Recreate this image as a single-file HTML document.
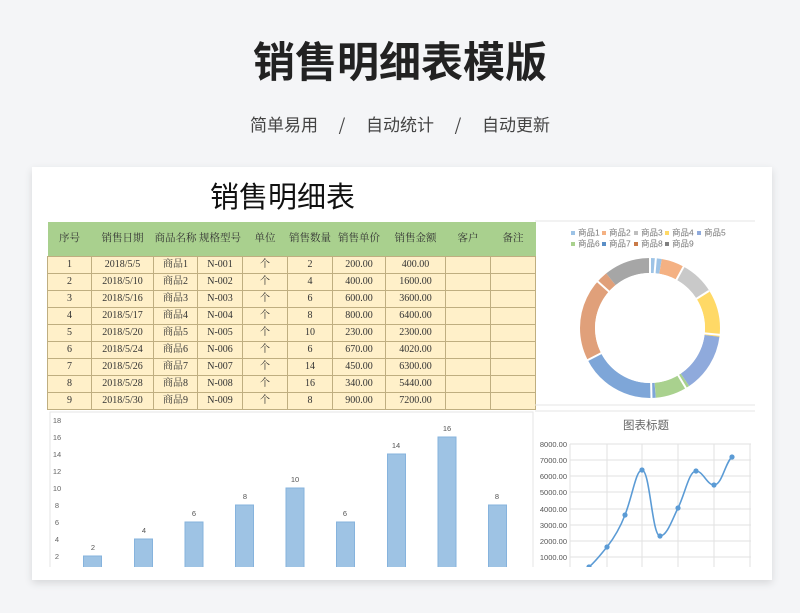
<!DOCTYPE html>
<html><head><meta charset="utf-8"><style>
*{margin:0;padding:0;box-sizing:border-box}
body{width:800px;height:613px;background:#f4f5f7;position:relative;overflow:hidden;font-family:"Liberation Sans","Noto Sans CJK SC",sans-serif}
.t{position:absolute;left:0;width:800px;text-align:center}
.card{position:absolute;left:32px;top:167px;width:740px;height:413px;background:#fff;box-shadow:0 3px 8px rgba(0,0,0,.12);overflow:hidden}
table{position:absolute;left:15px;top:55px;border-collapse:collapse;table-layout:fixed;font-family:"Liberation Serif","Noto Serif CJK SC",serif;font-size:10px;color:#333}
td{border:1px solid #bfae80;text-align:center;height:17px;line-height:16px;padding:0;background:#fff0c9;vertical-align:middle;overflow:hidden;white-space:nowrap}
td span{display:inline-block;line-height:16px;height:16px;vertical-align:top}
tr.h td{background:#a9d08e;height:34px;border:none;font-size:10.5px;color:#333}
</style></head><body>
<div class="t" style="top:32px;font-size:42px;font-weight:bold;color:#222;line-height:56px;font-family:'Noto Sans CJK SC',sans-serif">销售明细表模版</div>
<div class="t" style="top:112px;font-size:17px;color:#444;line-height:24px;font-family:'Noto Sans CJK SC',sans-serif">简单易用<span style="display:inline-block;width:48px;text-align:center">/</span>自动统计<span style="display:inline-block;width:48px;text-align:center">/</span>自动更新</div>
<div class="card">
<div style="position:absolute;left:178px;top:8px;font-size:29px;color:#111;font-family:'Noto Sans CJK SC',sans-serif;line-height:40px">销售明细表</div>
<table>
<colgroup><col style="width:44px"><col style="width:62px"><col style="width:44px"><col style="width:45px"><col style="width:45px"><col style="width:45px"><col style="width:53px"><col style="width:60px"><col style="width:45px"><col style="width:45px"></colgroup>
<tr class="h"><td>序号</td><td>销售日期</td><td>商品名称</td><td>规格型号</td><td>单位</td><td>销售数量</td><td>销售单价</td><td>销售金额</td><td>客户</td><td>备注</td></tr>
<tr><td>1</td><td>2018/5/5</td><td><span>商品1</span></td><td>N-001</td><td><span>个</span></td><td>2</td><td>200.00</td><td>400.00</td><td></td><td></td></tr>
<tr><td>2</td><td>2018/5/10</td><td><span>商品2</span></td><td>N-002</td><td><span>个</span></td><td>4</td><td>400.00</td><td>1600.00</td><td></td><td></td></tr>
<tr><td>3</td><td>2018/5/16</td><td><span>商品3</span></td><td>N-003</td><td><span>个</span></td><td>6</td><td>600.00</td><td>3600.00</td><td></td><td></td></tr>
<tr><td>4</td><td>2018/5/17</td><td><span>商品4</span></td><td>N-004</td><td><span>个</span></td><td>8</td><td>800.00</td><td>6400.00</td><td></td><td></td></tr>
<tr><td>5</td><td>2018/5/20</td><td><span>商品5</span></td><td>N-005</td><td><span>个</span></td><td>10</td><td>230.00</td><td>2300.00</td><td></td><td></td></tr>
<tr><td>6</td><td>2018/5/24</td><td><span>商品6</span></td><td>N-006</td><td><span>个</span></td><td>6</td><td>670.00</td><td>4020.00</td><td></td><td></td></tr>
<tr><td>7</td><td>2018/5/26</td><td><span>商品7</span></td><td>N-007</td><td><span>个</span></td><td>14</td><td>450.00</td><td>6300.00</td><td></td><td></td></tr>
<tr><td>8</td><td>2018/5/28</td><td><span>商品8</span></td><td>N-008</td><td><span>个</span></td><td>16</td><td>340.00</td><td>5440.00</td><td></td><td></td></tr>
<tr><td>9</td><td>2018/5/30</td><td><span>商品9</span></td><td>N-009</td><td><span>个</span></td><td>8</td><td>900.00</td><td>7200.00</td><td></td><td></td></tr>
</table>
</div>
<svg style="position:absolute;left:0;top:0" width="800" height="613" font-family="Liberation Sans,Noto Sans CJK SC,sans-serif">
<defs><clipPath id="c"><rect x="32" y="167" width="740" height="400"/></clipPath></defs>
<g clip-path="url(#c)">
<line x1="535" y1="221" x2="755" y2="221" stroke="#e6e6e6"/>
<line x1="535" y1="405" x2="755" y2="405" stroke="#e6e6e6"/>
<line x1="535" y1="411" x2="755" y2="411" stroke="#e6e6e6"/>
<rect x="50" y="412" width="483" height="160" fill="none" stroke="#e6e6e6"/>
<g font-size="8.5" fill="#777">
<rect x="571" y="231" width="4" height="4" fill="#9dc3e6"/><text x="578" y="235.5">商品1</text>
<rect x="602" y="231" width="4" height="4" fill="#f4b183"/><text x="609" y="235.5">商品2</text>
<rect x="634" y="231" width="4" height="4" fill="#bfbfbf"/><text x="641" y="235.5">商品3</text>
<rect x="665" y="231" width="4" height="4" fill="#ffd966"/><text x="672" y="235.5">商品4</text>
<rect x="697" y="231" width="4" height="4" fill="#8faadc"/><text x="704" y="235.5">商品5</text>
<rect x="571" y="242" width="4" height="4" fill="#a9d18e"/><text x="578" y="246.5">商品6</text>
<rect x="602" y="242" width="4" height="4" fill="#5b8fc7"/><text x="609" y="246.5">商品7</text>
<rect x="634" y="242" width="4" height="4" fill="#c97a48"/><text x="641" y="246.5">商品8</text>
<rect x="665" y="242" width="4" height="4" fill="#7f7f7f"/><text x="672" y="246.5">商品9</text>
</g>
<g transform="rotate(-90 650 328)" fill="none" stroke-width="15">
<circle cx="650" cy="328" r="62.5" stroke="#9dc3e6" stroke-dasharray="10.6 400" stroke-dashoffset="0"/>
<circle cx="650" cy="328" r="62.5" stroke="#f4b183" stroke-dasharray="21.2 400" stroke-dashoffset="-10.6"/>
<circle cx="650" cy="328" r="62.5" stroke="#c9c9c9" stroke-dasharray="31.8 400" stroke-dashoffset="-31.8"/>
<circle cx="650" cy="328" r="62.5" stroke="#ffd966" stroke-dasharray="42.5 400" stroke-dashoffset="-63.7"/>
<circle cx="650" cy="328" r="62.5" stroke="#8faadc" stroke-dasharray="53.1 400" stroke-dashoffset="-106.1"/>
<circle cx="650" cy="328" r="62.5" stroke="#a9d18e" stroke-dasharray="31.8 400" stroke-dashoffset="-159.2"/>
<circle cx="650" cy="328" r="62.5" stroke="#7ea6d8" stroke-dasharray="74.3 400" stroke-dashoffset="-191.1"/>
<circle cx="650" cy="328" r="62.5" stroke="#e0a07a" stroke-dasharray="84.9 400" stroke-dashoffset="-265.4"/>
<circle cx="650" cy="328" r="62.5" stroke="#a6a6a6" stroke-dasharray="42.5 400" stroke-dashoffset="-350.3"/>
</g>
<g stroke="#fff" stroke-width="2">
<line x1="650" y1="328" x2="650" y2="256"/>
<line x1="650" y1="328" x2="656.0" y2="256.3"/>
<line x1="650" y1="328" x2="684.7" y2="264.7"/>
<line x1="650" y1="328" x2="709.0" y2="290.9"/>
<line x1="650" y1="328" x2="721.5" y2="335.0"/>
<line x1="650" y1="328" x2="687.0" y2="389.9"/>
<line x1="650" y1="328" x2="651.5" y2="400"/>
<line x1="650" y1="328" x2="586.0" y2="361.0"/>
<line x1="650" y1="328" x2="596.0" y2="280.0"/>
</g>
<circle cx="650" cy="328" r="55" fill="#fff"/>
<g font-size="7.5" fill="#666" text-anchor="middle">
<text x="57" y="423">18</text><text x="57" y="440">16</text><text x="57" y="457">14</text><text x="57" y="474">12</text><text x="57" y="491">10</text><text x="57" y="508">8</text><text x="57" y="525">6</text><text x="57" y="542">4</text><text x="57" y="559">2</text>
</g>
<g fill="#9ec3e4" stroke="#86b3dd" stroke-width="1">
<rect x="83.5" y="556" width="18" height="20"/>
<rect x="134.5" y="539" width="18" height="40"/>
<rect x="185" y="522" width="18" height="60"/>
<rect x="235.5" y="505" width="18" height="80"/>
<rect x="286" y="488" width="18" height="90"/>
<rect x="336.5" y="522" width="18" height="60"/>
<rect x="387.5" y="454" width="18" height="120"/>
<rect x="438" y="437" width="18" height="140"/>
<rect x="488.5" y="505" width="18" height="80"/>
</g>
<g font-size="7.5" fill="#555" text-anchor="middle">
<text x="93" y="550">2</text><text x="144" y="533">4</text><text x="194" y="516">6</text><text x="245" y="499">8</text><text x="295" y="482">10</text><text x="345" y="516">6</text><text x="396" y="448">14</text><text x="447" y="431">16</text><text x="497" y="499">8</text>
</g>
<text x="646" y="429" font-size="11.5" fill="#666" text-anchor="middle">图表标题</text>
<g stroke="#e2e2e2" stroke-width="1">
<line x1="570" y1="444" x2="751" y2="444"/><line x1="570" y1="460" x2="751" y2="460"/><line x1="570" y1="476" x2="751" y2="476"/><line x1="570" y1="492" x2="751" y2="492"/><line x1="570" y1="509" x2="751" y2="509"/><line x1="570" y1="525" x2="751" y2="525"/><line x1="570" y1="541" x2="751" y2="541"/><line x1="570" y1="557" x2="751" y2="557"/>
<line x1="570" y1="444" x2="570" y2="570"/><line x1="607" y1="444" x2="607" y2="570"/><line x1="642" y1="444" x2="642" y2="570"/><line x1="678" y1="444" x2="678" y2="570"/><line x1="714" y1="444" x2="714" y2="570"/><line x1="750" y1="444" x2="750" y2="570"/>
</g>
<g font-size="7.5" fill="#555" text-anchor="end">
<text x="567" y="447">8000.00</text><text x="567" y="463">7000.00</text><text x="567" y="479">6000.00</text><text x="567" y="495">5000.00</text><text x="567" y="512">4000.00</text><text x="567" y="528">3000.00</text><text x="567" y="544">2000.00</text><text x="567" y="560">1000.00</text>
</g>
<path d="M589 567 C596 561 601 554 607 547 C614 538 620 528 625 515 C633 494 636 470 642 470 C650 470 652 536 660 536 C667 536 672 520 678 508 C685 494 689 471 696 471 C703 471 707 485 714 485 C722 485 725 463 732 457" fill="none" stroke="#5b9bd5" stroke-width="1.6"/>
<g fill="#5b9bd5">
<circle cx="589" cy="567" r="2.6"/><circle cx="607" cy="547" r="2.6"/><circle cx="625" cy="515" r="2.6"/><circle cx="642" cy="470" r="2.6"/><circle cx="660" cy="536" r="2.6"/><circle cx="678" cy="508" r="2.6"/><circle cx="696" cy="471" r="2.6"/><circle cx="714" cy="485" r="2.6"/><circle cx="732" cy="457" r="2.6"/>
</g>
</g>
</svg>
</body></html>
